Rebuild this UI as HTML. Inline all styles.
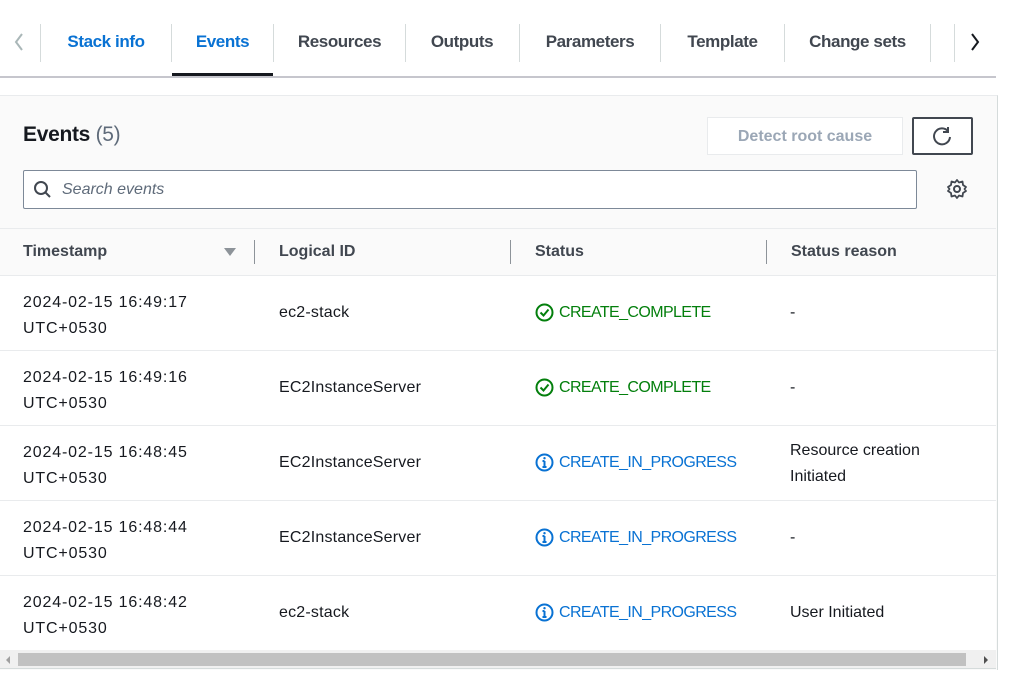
<!DOCTYPE html>
<html><head><style>
*{box-sizing:border-box;margin:0;padding:0}
body{width:1024px;height:681px;background:#fff;font-family:"Liberation Sans",sans-serif;color:#16191f;position:relative;overflow:hidden}
.abs{position:absolute}
.tab{position:absolute;top:22px;height:40px;line-height:40px;font-size:17px;font-weight:bold;color:#414750;text-align:center;letter-spacing:-0.4px}
.sep{position:absolute;top:24px;width:1px;height:38px;background:#d5dbdb}
.row{position:absolute;left:0;width:996px;height:75px;border-top:1px solid #e9ebed;background:#fff;font-size:16px}
.row div{position:absolute}
.ts{left:23px;top:14px;line-height:26px;letter-spacing:0.85px}
.lid{left:279px;top:28px;letter-spacing:0.2px}
.st{left:535px;top:27px;display:flex;align-items:center;gap:5px;letter-spacing:-0.6px}
.sr{left:790px;top:28px}
.g{color:#037f0c}.b{color:#0972d3}
.th{position:absolute;top:243px;font-size:16px;font-weight:bold;color:#414750}
.vs{position:absolute;top:240px;width:1px;height:24px;background:#8d9399}
</style></head><body>
<svg class="abs" style="left:12px;top:32px" width="14" height="20"><path d="M10 2 L4 10 L10 18" fill="none" stroke="#aab7b8" stroke-width="2"/></svg>
<div class="sep" style="left:40px"></div>
<div class="tab" style="left:42px;width:128px;color:#0972d3">Stack info</div>
<div class="sep" style="left:171px"></div>
<div class="tab" style="left:172px;width:101px;color:#0972d3">Events</div>
<div class="sep" style="left:273px"></div>
<div class="tab" style="left:274px;width:131px">Resources</div>
<div class="sep" style="left:405px"></div>
<div class="tab" style="left:406px;width:112px">Outputs</div>
<div class="sep" style="left:519px"></div>
<div class="tab" style="left:520px;width:140px">Parameters</div>
<div class="sep" style="left:660px"></div>
<div class="tab" style="left:661px;width:123px">Template</div>
<div class="sep" style="left:784px"></div>
<div class="tab" style="left:785px;width:145px">Change sets</div>
<div class="sep" style="left:930px"></div>
<div class="sep" style="left:954px"></div>
<svg class="abs" style="left:968px;top:32px" width="14" height="20"><path d="M4 2 L10 10 L4 18" fill="none" stroke="#16191f" stroke-width="2"/></svg>
<div class="abs" style="left:172px;top:73px;width:101px;height:4px;background:#16191f"></div>
<div class="abs" style="left:0;top:76px;width:996px;height:2px;background:#c6c6cd"></div>

<div class="abs" style="left:0;top:95px;width:998px;height:575px;background:#fafafa;border-top:1px solid #e9ebed;border-right:1px solid #d5dbdb"></div>
<div class="abs" style="left:23px;top:123px;font-size:21px;font-weight:bold;letter-spacing:-0.3px">Events <span style="font-weight:normal;color:#5f6b7a">(5)</span></div>
<div class="abs" style="left:707px;top:117px;width:196px;height:38px;border:1px solid #e9ebed;background:#fff;color:#9ba7b6;font-weight:bold;font-size:16px;text-align:center;line-height:37px">Detect root cause</div>
<div class="abs" style="left:912px;top:117px;width:61px;height:38px;border:2px solid #414750;border-radius:2px;background:#fff"></div>
<svg class="abs" style="left:930px;top:125px" width="24" height="22" viewBox="0 0 24 22"><path d="M18 6 A8 8 0 1 0 20 12" fill="none" stroke="#414750" stroke-width="2"/><path d="M18 2 V7 H13" fill="none" stroke="#414750" stroke-width="2"/></svg>
<div class="abs" style="left:23px;top:170px;width:894px;height:39px;border:1px solid #7d8998;border-radius:2px;background:#fff"></div>
<svg class="abs" style="left:33px;top:180px" width="20" height="20"><circle cx="8" cy="8" r="6" fill="none" stroke="#414750" stroke-width="2"/><path d="M12.5 12.5 L17 17" stroke="#414750" stroke-width="2"/></svg>
<div class="abs" style="left:62px;top:181px;font-size:16px;font-style:italic;color:#5f6b7a">Search events</div>
<svg class="abs" style="left:946px;top:178px" width="22" height="22" viewBox="0 0 22 22"><circle cx="11" cy="11" r="3" fill="none" stroke="#414750" stroke-width="2"/><path d="M11 2 L13 4.5 L16.5 3.5 L17 7 L20 9 L18.5 11 L20 13 L17 15 L16.5 18.5 L13 17.5 L11 20 L9 17.5 L5.5 18.5 L5 15 L2 13 L3.5 11 L2 9 L5 7 L5.5 3.5 L9 4.5 Z" fill="none" stroke="#414750" stroke-width="1.8" stroke-linejoin="round"/></svg>

<div class="abs" style="left:0;top:228px;width:996px;height:1px;background:#e9ebed"></div>
<div class="th" style="left:23px">Timestamp</div>
<svg class="abs" style="left:223px;top:247px" width="14" height="10"><path d="M1 1 H13 L7 9 Z" fill="#8d9399"/></svg>
<div class="vs" style="left:254px"></div>
<div class="th" style="left:279px">Logical ID</div>
<div class="vs" style="left:510px"></div>
<div class="th" style="left:535px">Status</div>
<div class="vs" style="left:766px"></div>
<div class="th" style="left:791px">Status reason</div>

<div class="row" style="top:275px"><div class="ts">2024-02-15 16:49:17<br>UTC+0530</div><div class="lid">ec2-stack</div><div class="st g"><svg width="19" height="19"><circle cx="9.5" cy="9.5" r="8" fill="none" stroke="#037f0c" stroke-width="2"/><path d="M5.5 9.5 L8.5 12.5 L13.5 6.5" fill="none" stroke="#037f0c" stroke-width="2"/></svg>CREATE_COMPLETE</div><div class="sr">-</div></div>
<div class="row" style="top:350px"><div class="ts">2024-02-15 16:49:16<br>UTC+0530</div><div class="lid">EC2InstanceServer</div><div class="st g"><svg width="19" height="19"><circle cx="9.5" cy="9.5" r="8" fill="none" stroke="#037f0c" stroke-width="2"/><path d="M5.5 9.5 L8.5 12.5 L13.5 6.5" fill="none" stroke="#037f0c" stroke-width="2"/></svg>CREATE_COMPLETE</div><div class="sr">-</div></div>
<div class="row" style="top:425px"><div class="ts">2024-02-15 16:48:45<br>UTC+0530</div><div class="lid">EC2InstanceServer</div><div class="st b"><svg width="19" height="19"><circle cx="9.5" cy="9.5" r="8" fill="none" stroke="#0972d3" stroke-width="2"/><path d="M9.5 8 V14 M7.5 14 H11.5 M7.5 8 H9.5" fill="none" stroke="#0972d3" stroke-width="2"/><circle cx="9.5" cy="5.2" r="1.2" fill="#0972d3"/></svg>CREATE_IN_PROGRESS</div><div class="sr" style="top:12px;line-height:26px">Resource creation<br>Initiated</div></div>
<div class="row" style="top:500px"><div class="ts">2024-02-15 16:48:44<br>UTC+0530</div><div class="lid">EC2InstanceServer</div><div class="st b"><svg width="19" height="19"><circle cx="9.5" cy="9.5" r="8" fill="none" stroke="#0972d3" stroke-width="2"/><path d="M9.5 8 V14 M7.5 14 H11.5 M7.5 8 H9.5" fill="none" stroke="#0972d3" stroke-width="2"/><circle cx="9.5" cy="5.2" r="1.2" fill="#0972d3"/></svg>CREATE_IN_PROGRESS</div><div class="sr">-</div></div>
<div class="row" style="top:575px"><div class="ts">2024-02-15 16:48:42<br>UTC+0530</div><div class="lid">ec2-stack</div><div class="st b"><svg width="19" height="19"><circle cx="9.5" cy="9.5" r="8" fill="none" stroke="#0972d3" stroke-width="2"/><path d="M9.5 8 V14 M7.5 14 H11.5 M7.5 8 H9.5" fill="none" stroke="#0972d3" stroke-width="2"/><circle cx="9.5" cy="5.2" r="1.2" fill="#0972d3"/></svg>CREATE_IN_PROGRESS</div><div class="sr">User Initiated</div></div>

<div class="abs" style="left:0;top:650px;width:996px;height:19px;background:#f0f0f0;border-bottom:1px solid #d5dbdb"></div>
<div class="abs" style="left:18px;top:653px;width:948px;height:13px;background:#c1c1c1"></div>
<svg class="abs" style="left:4px;top:655px" width="8" height="10"><path d="M6 1 L2 5 L6 9 Z" fill="#a0a0a0"/></svg>
<svg class="abs" style="left:982px;top:655px" width="8" height="10"><path d="M2 1 L6 5 L2 9 Z" fill="#505050"/></svg>
</body></html>
